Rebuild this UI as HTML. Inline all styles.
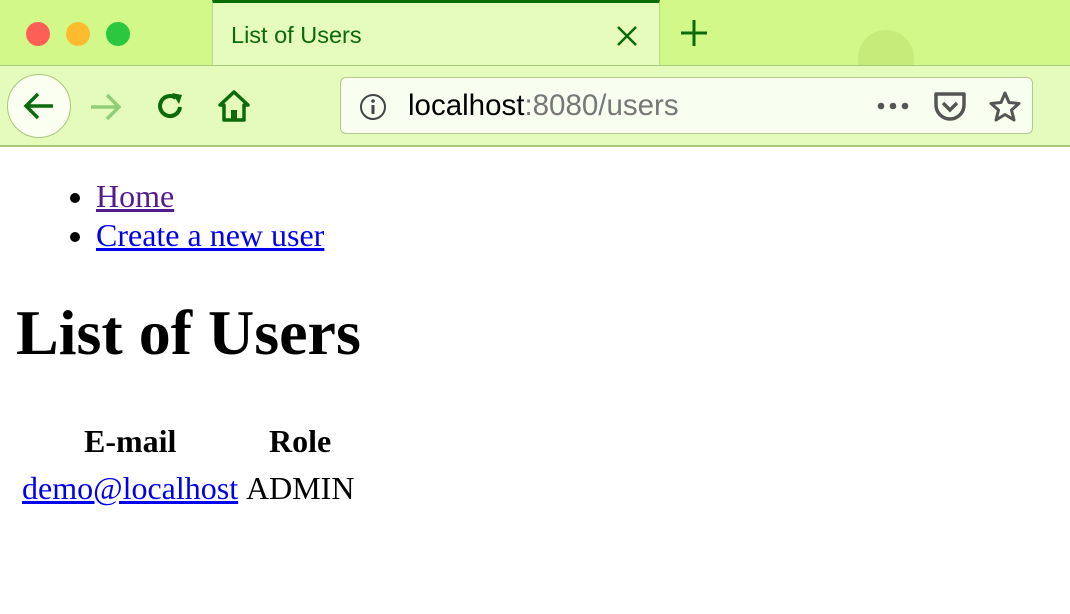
<!DOCTYPE html>
<html><head><style>
body{margin:0;width:1070px;height:614px;overflow:hidden;background:#fff;font-family:"Liberation Serif",serif;}
.tabs{position:absolute;left:0;top:0;width:1070px;height:65px;background:#d3f88a;}
.tab{position:absolute;left:212px;top:0;width:448px;height:66px;background:#e5fcbc;border-top:3px solid #0a6b0a;box-sizing:border-box;border-left:1px solid #b8d88a;border-right:1px solid #b8d88a;}
.tab span{position:absolute;left:18px;top:19px;font:23.5px "Liberation Sans",sans-serif;color:#0b6a0b;}
.dot{position:absolute;top:22px;width:24px;height:24px;border-radius:50%;}
.nav{position:absolute;left:0;top:65px;width:1070px;height:82px;background:#e4fbbc;border-top:1px solid #a8c878;border-bottom:2px solid #a8c878;box-sizing:border-box;}
.url{position:absolute;left:340px;top:11px;width:693px;height:57px;background:#f9fff0;border:1px solid #b4c890;border-radius:6px;box-sizing:border-box;}
.url .t{position:absolute;left:67px;top:11px;font:29.5px "Liberation Sans",sans-serif;color:#000;}
ul{margin:0;padding:0 0 0 96px;font-size:32px;line-height:39px;position:absolute;}
a{color:#0000ee}
h1{position:absolute;left:16px;top:296px;margin:0;font-size:64px;line-height:74px;font-weight:bold;}
.c{position:absolute;font-size:32px;}
</style></head><body>
<div class="tabs">
<div class="dot" style="left:26px;background:#fd5f57;"></div>
<div class="dot" style="left:66px;background:#febb2e;"></div>
<div class="dot" style="left:106px;background:#29c83f;"></div>
<div class="tab"><span>List of Users</span>
<svg style="position:absolute;left:403px;top:22px" width="22" height="22"><path d="M2 2L20 20M20 2L2 20" stroke="#0b6a0b" stroke-width="2.5"/></svg></div>
<svg style="position:absolute;left:680px;top:19px" width="28" height="28"><path d="M14 1V27M1 14H27" stroke="#0b6a0b" stroke-width="3"/></svg>
<div style="position:absolute;left:858px;top:30px;width:56px;height:56px;border-radius:50%;background:#c0e270;opacity:.6"></div>
</div>
<div class="nav">
<div style="position:absolute;left:7px;top:8px;width:64px;height:64px;border-radius:50%;background:#fbfff2;border:1px solid #a8c878;box-sizing:border-box"></div>
<svg style="position:absolute;left:22px;top:25px" width="34" height="30"><path d="M31 15H4M16 3L4 15L16 27" fill="none" stroke="#0b6a0b" stroke-width="3.5"/></svg>
<svg style="position:absolute;left:89px;top:26px" width="34" height="30"><path d="M2 15H29M18 3L30 15L18 27" fill="none" stroke="#8fcf7a" stroke-width="3.5"/></svg>
<svg style="position:absolute;left:155px;top:25px" width="32" height="32"><path d="M25 16A10 10 0 1 1 21 7" fill="none" stroke="#0b6a0b" stroke-width="4"/><path d="M17 2L27 4L24 13Z" fill="#0b6a0b"/></svg>
<svg style="position:absolute;left:217px;top:23px" width="34" height="34"><path d="M17 3L3 16H7V31H27V16H31Z" fill="none" stroke="#0b6a0b" stroke-width="3.5" stroke-linejoin="round"/><rect x="14" y="21" width="6" height="10" fill="#0b6a0b"/></svg>
<div class="url">
<svg style="position:absolute;left:18px;top:15px" width="28" height="28"><circle cx="14" cy="14" r="12" fill="none" stroke="#444" stroke-width="2"/><rect x="12.5" y="12" width="3" height="9" fill="#444"/><circle cx="14" cy="8" r="1.8" fill="#444"/></svg>
<div class="t">localhost<span style="color:#777">:8080/users</span></div>
<svg style="position:absolute;left:535px;top:22px" width="36" height="12"><circle cx="5" cy="6" r="3.3" fill="#555"/><circle cx="17" cy="6" r="3.3" fill="#555"/><circle cx="29" cy="6" r="3.3" fill="#555"/></svg>
<svg style="position:absolute;left:592px;top:13px" width="34" height="32"><path d="M3 3H31V14A14 14 0 0 1 3 14Z" fill="none" stroke="#555" stroke-width="3.5" stroke-linejoin="round"/><path d="M10 12L17 19L24 12" fill="none" stroke="#555" stroke-width="3.5"/></svg>
<svg style="position:absolute;left:647px;top:12px" width="34" height="34"><path d="M17 3L21 12.5L31 13.5L23.5 20L26 30L17 24.5L8 30L10.5 20L3 13.5L13 12.5Z" fill="none" stroke="#555" stroke-width="3" stroke-linejoin="round"/></svg>
</div>
</div>
<ul style="top:177px"><li><a href="#" style="color:#551a8b">Home</a></li><li><a href="#">Create a new user</a></li></ul>
<h1>List of Users</h1>
<div class="c" style="left:84px;top:423px;font-weight:bold">E-mail</div>
<div class="c" style="left:269px;top:423px;font-weight:bold">Role</div>
<div class="c" style="left:22px;top:470px"><a href="#">demo@localhost</a></div>
<div class="c" style="left:246px;top:470px">ADMIN</div>
</body></html>
